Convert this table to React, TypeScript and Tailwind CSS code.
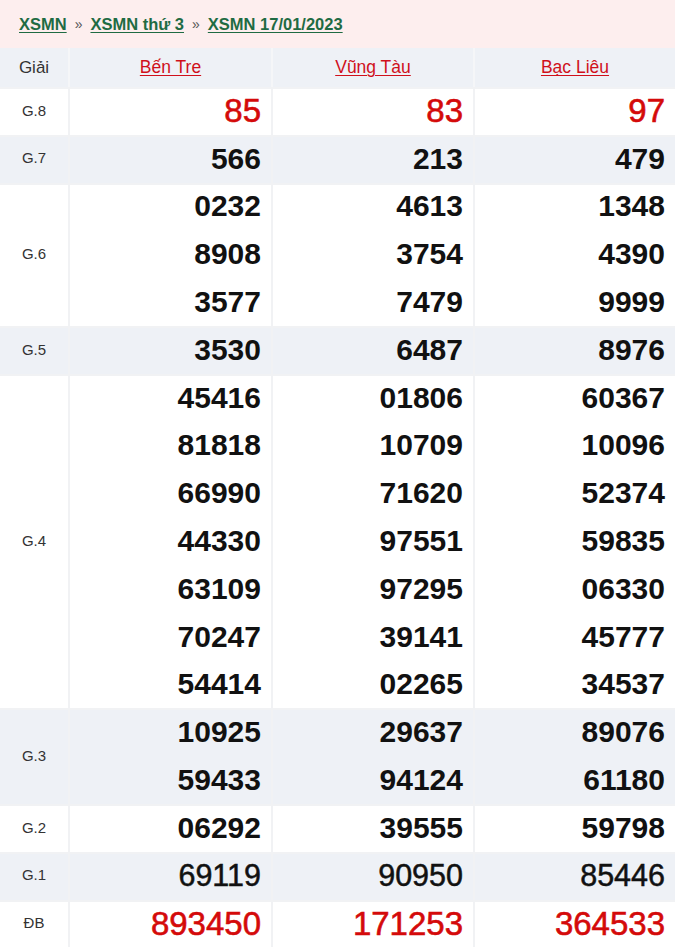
import React from "react";

type Row = { label: string; vals: string[][]; kind: "red" | "bold" | "regular" };

const rows: Row[] = [
  { label: "G.8", vals: [["85"], ["83"], ["97"]], kind: "red" },
  { label: "G.7", vals: [["566"], ["213"], ["479"]], kind: "bold" },
  {
    label: "G.6",
    vals: [
      ["0232", "8908", "3577"],
      ["4613", "3754", "7479"],
      ["1348", "4390", "9999"],
    ],
    kind: "bold",
  },
  { label: "G.5", vals: [["3530"], ["6487"], ["8976"]], kind: "bold" },
  {
    label: "G.4",
    vals: [
      ["45416", "81818", "66990", "44330", "63109", "70247", "54414"],
      ["01806", "10709", "71620", "97551", "97295", "39141", "02265"],
      ["60367", "10096", "52374", "59835", "06330", "45777", "34537"],
    ],
    kind: "bold",
  },
  {
    label: "G.3",
    vals: [
      ["10925", "59433"],
      ["29637", "94124"],
      ["89076", "61180"],
    ],
    kind: "bold",
  },
  { label: "G.2", vals: [["06292"], ["39555"], ["59798"]], kind: "bold" },
  { label: "G.1", vals: [["69119"], ["90950"], ["85446"]], kind: "regular" },
  { label: "ĐB", vals: [["893450"], ["171253"], ["364533"]], kind: "red" },
];

const font = { fontFamily: '"Liberation Sans", Arial, sans-serif' };

export default function App() {
  return (
    <div className="w-[675px] bg-white" style={font}>
      <div className="h-[48px] bg-[#fdeeee] flex items-center pl-[19px] text-[16.5px] font-bold text-[#1f6b43]">
        <span className="underline underline-offset-2">XSMN</span>
        <span className="mx-[8px] text-[#555] font-normal text-[14px]">»</span>
        <span className="underline underline-offset-2">XSMN thứ 3</span>
        <span className="mx-[8px] text-[#555] font-normal text-[14px]">»</span>
        <span className="underline underline-offset-2">XSMN 17/01/2023</span>
      </div>
      <div className="grid grid-cols-[68px_203px_202px_202px] h-[39px] bg-[#eef1f6]">
        <div className="flex items-center justify-center text-[17px] text-[#333]">Giải</div>
        {["Bến Tre", "Vũng Tàu", "Bạc Liêu"].map((p) => (
          <div key={p} className="flex items-center justify-center border-l-2 border-[#f5f6f8] text-[17.5px] text-[#d0101b] underline underline-offset-2">
            {p}
          </div>
        ))}
      </div>
      {rows.map((r, i) => {
        const bg = i % 2 === 1 ? "bg-[#eef1f6]" : "bg-white";
        const textCls =
          r.kind === "red"
            ? "text-[33px] text-[#d40a0a] font-normal [-webkit-text-stroke:0.6px_#d40a0a]"
            : r.kind === "bold"
            ? "text-[30px] text-[#111] font-bold"
            : "text-[30.5px] text-[#111] font-normal [-webkit-text-stroke:0.5px_#111]";
        return (
          <div
            key={r.label}
            className={`grid grid-cols-[68px_203px_202px_202px] ${bg} shadow-[inset_0_2px_0_#f1f2f4]`}
          >
            <div className="flex items-center justify-center text-[15px] text-[#333]">{r.label}</div>
            {r.vals.map((col, j) => (
              <div key={j} className="flex flex-col border-l-2 border-[#f1f2f4]">
                {col.map((v, k) => (
                  <div
                    key={k}
                    className={`h-[47.8px] flex items-center justify-end pr-[10px] leading-none ${textCls}`}
                  >
                    {v}
                  </div>
                ))}
              </div>
            ))}
          </div>
        );
      })}
    </div>
  );
}
